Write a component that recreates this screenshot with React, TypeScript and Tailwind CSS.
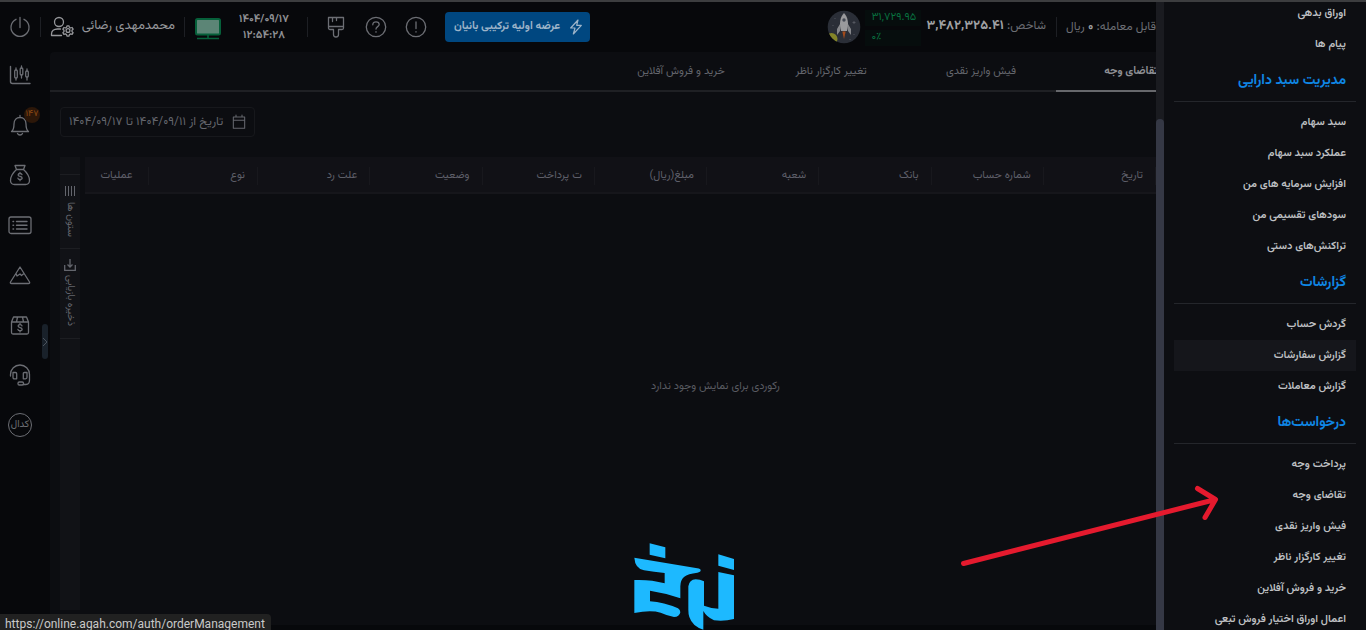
import React from "react";

type MenuGroup = { title?: string; items: string[] };

const menu: MenuGroup[] = [
  { items: ["اوراق بدهی", "پیام ها"] },
  {
    title: "مدیریت سبد دارایی",
    items: ["سبد سهام", "عملکرد سبد سهام", "افزایش سرمایه های من", "سودهای تقسیمی من", "تراکنش‌های دستی"],
  },
  { title: "گزارشات", items: ["گردش حساب", "گزارش سفارشات", "گزارش معاملات"] },
  {
    title: "درخواست‌ها",
    items: [
      "پرداخت وجه",
      "تقاضای وجه",
      "فیش واریز نقدی",
      "تغییر کارگزار ناظر",
      "خرید و فروش آفلاین",
      "اعمال اوراق اختیار فروش تبعی",
    ],
  },
];

const hoveredItem = "گزارش سفارشات";

const tabs = ["تقاضای وجه", "فیش واریز نقدی", "تغییر کارگزار ناظر", "خرید و فروش آفلاین"];

const columns = ["تاریخ", "شماره حساب", "بانک", "شعبه", "مبلغ(ریال)", "ت پرداخت", "وضعیت", "علت رد", "نوع", "عملیات"];

function Icon({ children, className = "size-6" }: { children: React.ReactNode; className?: string }) {
  return (
    <svg
      viewBox="0 0 24 24"
      className={className}
      fill="none"
      stroke="currentColor"
      strokeWidth="1.3"
      strokeLinecap="round"
      strokeLinejoin="round"
      aria-hidden="true"
    >
      {children}
    </svg>
  );
}

function Divider() {
  return <span className="h-5 w-px shrink-0 bg-[#1d1f24]" />;
}

function Dollar() {
  return <path d="M14 11.7c-.2-.8-.9-1.2-1.9-1.2-1.200 0-2 .5-2 1.400 0 2.100 4 .9 4 3.100 0 .9-.8 1.500-2.100 1.500-1.100 0-1.900-.5-2.100-1.400M12 9.300v1.200M12 16.500v1.200" />;
}

function Header() {
  return (
    <header className="flex h-[52px] shrink-0 items-center justify-between bg-[#07080b] pt-[2px] pr-[210px] text-[#6c6e74]">
      <div className="flex items-center">
        <button aria-label="خروج" className="flex w-10 justify-center">
          <Icon>
            <path d="M12 2.500v10M8 4.300a9 9 0 1 0 8 0" />
          </Icon>
        </button>
        <Divider />
        <button className="flex items-center gap-2 pl-[9px] pr-[9px] text-[13px] text-[#96979b]">
          <Icon>
            <circle cx="9" cy="7" r="4.500" />
            <path d="M11.500 20.500H1.500v-1.500c0-3 2.500-5 6-5h3" />
            <circle cx="18" cy="15.500" r="1.900" />
            <path d="M17 10.800h2l.4 1.500 1.200.7 1.500-.5 1 1.700-1.100 1.100v1.300l1.100 1.100-1 1.700-1.500-.5-1.200.7-.4 1.500h-2l-.4-1.500-1.200-.7-1.500.5-1-1.700 1.100-1.100v-1.300l-1.100-1.100 1-1.700 1.500.5 1.200-.7z" />
          </Icon>
          <span dir="rtl" className="w-[93px] whitespace-nowrap text-center">محمدمهدی رضائی</span>
        </button>
        <Divider />
        <svg viewBox="0 0 26 22" className="mt-1 ml-[10px] h-[22px] w-[26px]" aria-hidden="true">
          <rect x="1" y="1" width="24" height="15.500" rx="1.500" fill="#5c8576" stroke="#06603a" strokeWidth="2" />
          <path d="M13 17v3M2 20.500h22" stroke="#06603a" strokeWidth="1.600" />
        </svg>
        <div className="flex w-[86px] flex-col items-center pt-[2px] text-[11px] font-bold leading-4 text-[#8f9094]">
          <span>۱۴۰۴/۰۹/۱۷</span>
          <span>۱۲:۵۴:۲۸</span>
        </div>
        <Divider />
        <div className="flex items-center gap-4 pl-4 pr-[17px]">
          <button aria-label="پوسته">
            <Icon>
              <path d="M4.500 2.500h15v10.500a1.500 1.500 0 0 1-1.500 1.500h-3.500v5a2.500 2.500 0 0 1-5 0v-5H6a1.500 1.500 0 0 1-1.500-1.500zM4.500 11.500h15M8.500 2.500v4M12.500 2.500v3" />
            </Icon>
          </button>
          <button aria-label="راهنما">
            <Icon>
              <circle cx="12" cy="12" r="9.700" />
              <path d="M8.800 9.800c0-1.900 1.300-3 3.200-3s3.200 1 3.200 2.700c0 2-3.200 2.300-3.200 4.500M12 16.600v.6" />
            </Icon>
          </button>
          <button aria-label="اطلاعیه">
            <Icon>
              <circle cx="12" cy="12" r="9.700" />
              <path d="M12 7v6.500M12 16.600v.5" />
            </Icon>
          </button>
        </div>
        <button className="flex h-[30px] w-[145px] items-center justify-between rounded bg-[#004780] pl-[9px] pr-[6px] text-[11px] font-bold text-[#9db4c9]">
          <span dir="rtl" className="whitespace-nowrap">عرضه اولیه ترکیبی بانیان</span>
          <Icon className="size-4">
            <path strokeWidth="1.800" d="M15 1.500 4 13.500h6.500L8 22.500l12-13h-7z" />
          </Icon>
        </button>
      </div>

      <div className="flex items-center text-xs">
        <svg viewBox="0 0 34 34" className="size-[34px]" aria-hidden="true">
          <defs>
            <clipPath id="badge">
              <circle cx="17" cy="17" r="16.300" />
            </clipPath>
          </defs>
          <g clipPath="url(#badge)">
            <rect width="34" height="34" fill="#2a2e37" />
            <circle cx="4.500" cy="29" r="6" fill="#838428" />
            <path d="M17 3c-4 4-5 11-3 18h6c2-7 1-14-3-18z" fill="#9a9a9d" />
            <path d="M13 14l-3 5v6l3-4zM21 14l3 5v6l-3-4z" fill="#85868a" />
            <circle cx="17" cy="10" r="1.700" fill="#454a55" />
            <path d="M15.300 21.500h3.400L17 29z" fill="#a24a1b" />
            <path d="M27 11v3M25.500 12.500h3M8 8v1M6 15v1M27 24v1M23 29v1" stroke="#5b5e66" strokeWidth=".8" />
          </g>
        </svg>
        <div className="ml-1 flex w-[56px] flex-col gap-1 pt-[2px] text-[11px] leading-4 text-[#08703f]">
          <span className="bg-[#060d0d] pl-[6px]">۳۱,۷۲۹.۹۵</span>
          <span className="bg-[#060d0d] pl-[6px]">۰٪</span>
        </div>
        <p dir="rtl" className="ml-[5px] mr-[10px] whitespace-nowrap">
          شاخص: <strong className="text-[13px] text-[#a0a1a4]">۳,۴۸۲,۳۲۵.۴۱</strong>
        </p>
        <Divider />
        <p dir="rtl" className="ml-[9px] whitespace-nowrap">
          قابل معامله: <strong className="text-[#a0a1a4]">۰</strong> ریال
        </p>
      </div>
    </header>
  );
}

function Sidebar() {
  return (
    <nav className="relative flex w-[50px] shrink-0 flex-col gap-[26px] bg-[#07080b] pl-2 pt-[11px] text-[#6c6e74]">
      <button aria-label="بازار" className="size-6">
        <Icon>
          <path d="M2.500 3.500v15a2 2 0 0 0 2 2h17.500" strokeWidth="1.400" />
          <path d="M8 5v2M8 15v2M13.500 3v2M13.500 12v3M19 6v2M19 14v3" />
          <rect x="6.700" y="7" width="2.600" height="8" rx="1" />
          <rect x="12.200" y="5" width="2.600" height="7" rx="1" />
          <rect x="17.700" y="8" width="2.600" height="6" rx="1" />
        </Icon>
      </button>
      <button aria-label="اعلان‌ها" className="relative size-6">
        <Icon>
          <path d="M3.500 18.500c2-1.500 2.500-3.500 2.500-7.500 0-4 2.500-6.500 6-6.500s6 2.500 6 6.500c0 4 .5 6 2.500 7.500zM12 2.500v2M9.500 20.500c1 2 4 2 5 0" />
        </Icon>
        <span className="absolute -top-[6px] left-4 flex size-4 items-center justify-center rounded-full bg-[#2c1709] text-[9px] text-[#8c4913]">۱۴۷</span>
      </button>
      <button aria-label="صندوق" className="size-6">
        <Icon>
          <path d="M8.500 6.500 7 2.500h10l-1.500 4zM8.500 6.500c-3.500 3-6.500 8-6 11.500.3 2.500 1.500 3.500 4 3.500h11c2.500 0 3.700-1 4-3.500.5-3.500-2.500-8.500-6-11.500" />
          <Dollar />
        </Icon>
      </button>
      <button aria-label="لیست" className="size-6">
        <Icon>
          <rect x="1" y="4" width="22" height="16.500" rx="2" />
          <path d="M8.500 8.500H19M8.500 12.200H19M8.500 16H19M5 8.500h.6M5 12.200h.6M5 16h.6" strokeWidth="1.400" />
        </Icon>
      </button>
      <button aria-label="آگاه" className="size-6">
        <Icon>
          <path d="M12 4 2.500 19c-.5 1 0 1.500 1 1.500h17c1 0 1.500-.5 1-1.500zM8 10.500l1 2.500 3-2 1.500 1.500 2.500-2" />
        </Icon>
      </button>
      <button aria-label="بسته" className="size-6">
        <Icon>
          <path d="M3.500 9v10.500c0 1 .5 1.500 1.500 1.500h14c1 0 1.500-.5 1.500-1.500V9zM3.500 9l2-5h13l2 5M8.500 9l1-5M15.500 9l-1-5" />
          <g transform="translate(0 1.200)">
            <Dollar />
          </g>
        </Icon>
      </button>
      <button aria-label="پشتیبانی" className="size-6">
        <Icon>
          <path d="M2.500 13v-1.500a9.500 9.500 0 0 1 19 0V17c0 3-1 4.500-3.500 4.500h-3" />
          <path d="M5 9.500h2.500c.8 0 1.200.4 1.200 1.200v5.100H6.500C5.500 15.800 5 15.300 5 14.300zM19 9.500h-2.500c-.8 0-1.200.4-1.200 1.200v5.100h2.200c1 0 1.500-.5 1.500-1.500z" />
          <rect x="10" y="19" width="5.500" height="3" rx="1.300" />
        </Icon>
      </button>
      <button className="flex size-6 items-center justify-center rounded-full border border-current text-[10px] leading-none">
        کدال
      </button>
      <button
        aria-label="باز کردن"
        className="absolute right-[2px] top-[272px] flex h-[35px] w-[6px] items-center justify-center rounded bg-[#19212a] text-[#4b535d]"
      >
        <svg viewBox="0 0 6 10" className="h-[10px] w-[6px]" fill="none" stroke="currentColor" aria-hidden="true">
          <path d="M1 1l4 4-4 4" />
        </svg>
      </button>
    </nav>
  );
}

function GridTools() {
  return (
    <div className="flex w-5 shrink-0 flex-col bg-[#111216] pt-[17px] text-[10px] text-[#64666d]">
      <button className="flex h-[74px] flex-col items-center gap-[6px] border-t border-[#1d1e22] pt-[11px]">
        <svg viewBox="0 0 12 10" className="h-[10px] w-3" stroke="currentColor" aria-hidden="true">
          <path d="M1.500 0v10M4.500 0v10M7.500 0v10M10.500 0v10" />
        </svg>
        <span dir="rtl" className="whitespace-nowrap leading-4 [writing-mode:vertical-rl]">ستون ها</span>
      </button>
      <button className="flex h-[91px] flex-col items-center gap-1 border-y border-[#1d1e22] pt-[10px]">
        <svg viewBox="0 0 12 12" className="size-3" fill="none" stroke="currentColor" strokeWidth="1.300" aria-hidden="true">
          <path d="M.7 6v5.300h10.600V6M6 0v7.500M3.500 5.500 6 8l2.500-2.500" />
        </svg>
        <span dir="rtl" className="whitespace-nowrap leading-4 [writing-mode:vertical-rl]">ذخیره بازیابی</span>
      </button>
    </div>
  );
}

function Content() {
  return (
    <main className="mb-[5px] flex min-w-0 grow flex-col rounded-tl bg-[#0c0d11]">
      <div dir="rtl" role="tablist" className="flex h-10 shrink-0 border-b-2 border-[#1f2024] pr-[160px] text-[11px] text-[#64666d]">
        {tabs.map((tab, i) => (
          <button
            key={tab}
            role="tab"
            aria-selected={i === 0}
            className={
              i === 0
                ? "-mb-[2px] w-[150px] whitespace-nowrap border-b-2 border-[#67686c] pt-[2px] font-bold text-[#8e8f94]"
                : "w-[150px] whitespace-nowrap pt-[2px]"
            }
          >
            {tab}
          </button>
        ))}
      </div>
      <div className="flex grow flex-col gap-5 pb-[15px] pl-[10px] pr-[210px] pt-[15px]">
        <button className="flex h-[30px] w-[195px] items-center justify-between rounded border border-[#17181c] pl-2 pr-[7px] text-xs text-[#64666d]">
          <span dir="rtl" className="whitespace-nowrap">تاریخ از ۱۴۰۴/۰۹/۱۱ تا ۱۴۰۴/۰۹/۱۷</span>
          <Icon className="size-4">
            <path strokeWidth="1.600" d="M3.500 4.500h17v17h-17zM3.500 9.500h17M7.500 1.500v3M16.500 1.500v3" />
          </Icon>
        </button>
        <div className="flex grow gap-[5px]">
          <GridTools />
          <div className="flex min-w-0 grow flex-col">
            <table dir="rtl" className="w-full table-fixed bg-[#111116] text-[11px] text-[#5e5f69]">
              <thead>
                <tr className="h-9 border-b-2 border-[#16161b]">
                  {columns.map((column) => (
                    <th
                      key={column}
                      className={
                        column === "عملیات"
                          ? "w-16 p-0 pt-[2px] font-normal"
                          : column === "نوع"
                            ? "w-[109px] p-0 pt-[2px] font-normal"
                            : "p-0 pt-[2px] font-normal"
                      }
                    >
                      <div
                        className={
                          column === "عملیات"
                            ? "whitespace-nowrap border-r border-[#18181d] text-center leading-[18px]"
                            : "whitespace-nowrap border-r border-[#18181d] pr-3 text-right leading-[18px]"
                        }
                      >
                        {column}
                      </div>
                    </th>
                  ))}
                </tr>
              </thead>
            </table>
            <p dir="rtl" className="pl-[190px] pt-[185px] text-center text-[11px] leading-4 text-[#5a5b62]">
              رکوردی برای نمایش وجود ندارد
            </p>
          </div>
        </div>
      </div>
    </main>
  );
}

function Drawer() {
  return (
    <aside className="absolute inset-y-0 right-0 flex w-[210px] overflow-hidden bg-[#0d0e12]">
      <div className="w-2 shrink-0 bg-[#1a1b20] pt-[119px]">
        <div className="h-full rounded-t bg-[#353845]" />
      </div>
      <nav dir="rtl" className="-mt-[2px] grow px-[10px]">
        {menu.map((group, i) => (
          <section key={i}>
            {group.title && (
              <h2 className="mb-[5px] flex h-[42px] items-center border-b border-[#24262b] pr-[10px] text-sm font-bold text-[#0f86e4]">
                {group.title}
              </h2>
            )}
            <ul>
              {group.items.map((item) => (
                <li key={item}>
                  <a
                    href="#"
                    className={
                      item === hoveredItem
                        ? "flex h-[31px] items-center whitespace-nowrap bg-[#15161b] pr-[10px] pt-[2px] text-[11px] font-semibold text-[#bfc0c3]"
                        : "flex h-[31px] items-center whitespace-nowrap pr-[10px] pt-[2px] text-[11px] font-semibold text-[#bfc0c3]"
                    }
                  >
                    {item}
                  </a>
                </li>
              ))}
            </ul>
          </section>
        ))}
      </nav>
    </aside>
  );
}

export default function App() {
  return (
    <div className="relative flex h-screen flex-col overflow-hidden bg-[#07080b] font-['Vazirmatn','Noto_Sans_Arabic','DejaVu_Sans',sans-serif]">
      <Header />
      <div className="flex min-h-0 grow">
        <Sidebar />
        <Content />
      </div>
      <Drawer />
      <div className="absolute inset-x-0 top-0 h-[2px] bg-[#3c3d3f]" />

      <svg viewBox="100 40 300 261" className="absolute bottom-0 left-[634px] h-[87px] w-[100px]" fill="#1db9ff" aria-hidden="true">
        <path d="M147 41 194 53V86L147 75ZM353 74 400 88V121L353 108Z" />
        <path d="M101 84 290 116Q300 117 300 122Q300 128 290 129Q262 132 250 142Q239 152 239 170V206Q195 190 148 183V215Q190 218 232 236Q239 240 239 248Q236 262 220 262Q200 258 180 249Q150 240 101 250V151Q150 149 192 161V130Q160 127 130 122Q103 116 101 84Z" />
        <path d="M263 170Q266 150 285 149Q298 149 310 155V228Q330 236 353 237V127L400 137V268Q370 276 340 272Q318 262 308 244V300Q275 290 266 262Q263 255 263 240Z" />
      </svg>

      <svg
        viewBox="0 0 270 90"
        className="pointer-events-none absolute right-[136px] top-[482px] h-[90px] w-[270px]"
        fill="none"
        stroke="#e51a2e"
        strokeWidth="5"
        strokeLinecap="round"
        strokeLinejoin="round"
        aria-hidden="true"
      >
        <path d="M3.500 81.500 255.500 17.500M237.500 6.500 255.500 17.500 245 35.500" />
      </svg>

      <div className="absolute bottom-0 left-0 h-4 rounded-tr bg-[#212121] pl-[5px] pr-[6px] font-['Roboto','Open_Sans',sans-serif] text-xs leading-5 text-[#c9c9c9]">
        https://online.agah.com/auth/orderManagement
      </div>
    </div>
  );
}
